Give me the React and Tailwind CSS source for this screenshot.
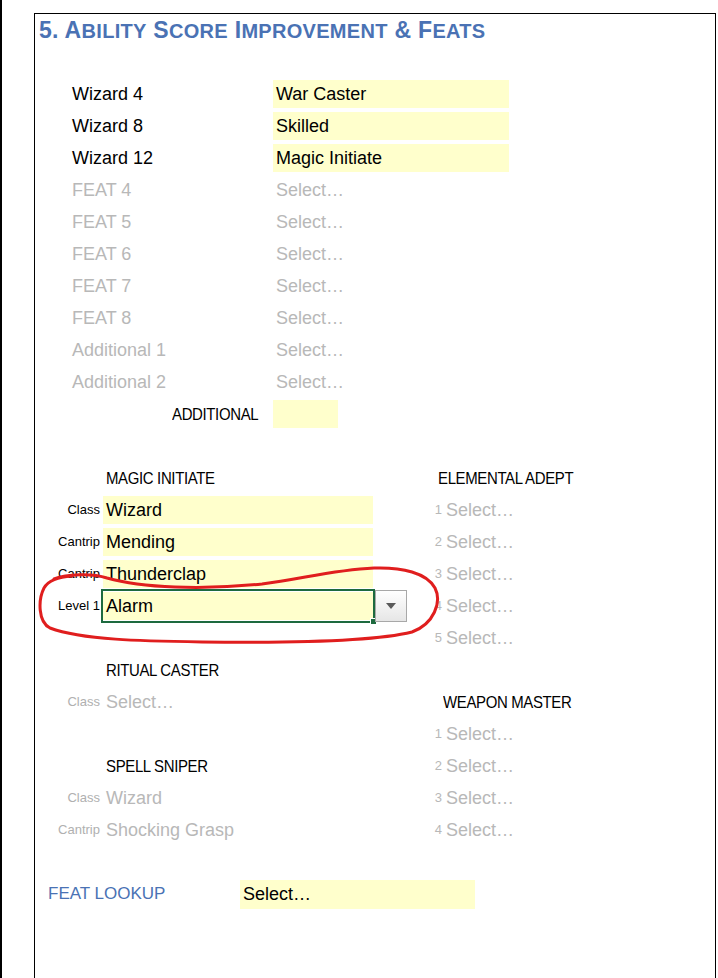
import React from 'react';

const featRows = [
  { label: 'Wizard 4', value: 'War Caster', set: true },
  { label: 'Wizard 8', value: 'Skilled', set: true },
  { label: 'Wizard 12', value: 'Magic Initiate', set: true },
  { label: 'FEAT 4' },
  { label: 'FEAT 5' },
  { label: 'FEAT 6' },
  { label: 'FEAT 7' },
  { label: 'FEAT 8' },
  { label: 'Additional 1' },
  { label: 'Additional 2' },
];

// narrow caps heading, like the sheet's condensed labels
function Caps({ children }) {
  return (
    <span className="inline-block origin-left scale-x-[0.88] text-[17px] tracking-[-0.4px] whitespace-nowrap">
      {children}
    </span>
  );
}

function Header({ children, className = '' }) {
  return (
    <div className={`h-[32px] flex items-center pt-[2px] text-black ${className}`}>
      <Caps>{children}</Caps>
    </div>
  );
}

// small label + yellow cell (left block)
function SubRow({ label, value, filled, selected }) {
  return (
    <div className="h-[32px] flex items-center">
      <div className={`w-[65px] text-right text-[13px] ${filled ? 'text-black' : 'text-[#b0b0b0]'}`}>{label}</div>
      <div className="relative ml-[3px]">
        <div
          className={`w-[270px] h-[28px] flex items-center pl-[3px] text-[18px] ${
            filled ? 'bg-[#ffffcc] text-black' : 'text-[#b8b8b8]'
          }`}
        >
          {value}
        </div>
        {selected && (
          <>
            <div className="absolute -left-[2px] -top-[3px] w-[274px] h-[34px] border-[2.5px] border-[#1d6a3f]" />
            <div className="absolute left-[267px] top-[26px] w-[7px] h-[7px] bg-[#1d6a3f] border border-white" />
            <div className="absolute left-[272px] -top-[2px] w-[32px] h-[32px] border border-[#a8a8a8] bg-gradient-to-b from-white to-[#e6e6e6] flex items-center justify-center">
              <svg width="10" height="6" viewBox="0 0 10 6">
                <path d="M0 0 H10 L5 6 Z" fill="#5a5a5a" />
              </svg>
            </div>
          </>
        )}
      </div>
    </div>
  );
}

function NumRow({ n }) {
  return (
    <div className="h-[32px] flex items-center">
      <div className="w-[22px] text-right text-[13px] text-[#b8b8b8]">{n}</div>
      <div className="pl-[4px] text-[18px] text-[#b8b8b8]">Select…</div>
    </div>
  );
}

const Blank = () => <div className="h-[32px]" />;

export default function App() {
  return (
    <div className="relative w-[718px] h-[978px] bg-white border-l-2 border-black overflow-hidden font-['Liberation_Sans',Arial,sans-serif]">
      <div className="ml-[32px] mt-[13px] w-[682px] h-[965px] border-t border-l border-r border-black">
        {/* title */}
        <div className="h-[32px] flex items-center pl-[4px] pt-[1px] font-bold text-[#4a72b4] tracking-[0.3px] whitespace-nowrap">
          <span className="text-[23px]">5. A</span>
          <span className="text-[20px]">BILITY</span>
          <span className="text-[23px]">&nbsp;S</span>
          <span className="text-[20px]">CORE</span>
          <span className="text-[23px]">&nbsp;I</span>
          <span className="text-[20px]">MPROVEMENT</span>
          <span className="text-[23px]">&nbsp;&amp; F</span>
          <span className="text-[20px]">EATS</span>
        </div>
        <Blank />

        {/* feats per level */}
        {featRows.map((r) => (
          <div key={r.label} className="h-[32px] flex items-center pl-[37px]">
            <div className={`w-[201px] text-[18px] ${r.set ? 'text-black' : 'text-[#b8b8b8]'}`}>{r.label}</div>
            <div
              className={`w-[236px] h-[28px] flex items-center pl-[3px] text-[18px] ${
                r.set ? 'bg-[#ffffcc] text-black' : 'text-[#b8b8b8]'
              }`}
            >
              {r.value || 'Select…'}
            </div>
          </div>
        ))}
        <div className="h-[32px] flex items-center pl-[37px]">
          <div className="w-[201px] pl-[100px] pt-[2px]">
            <Caps>ADDITIONAL</Caps>
          </div>
          <div className="w-[65px] h-[28px] bg-[#ffffcc]" />
        </div>
        <Blank />

        {/* feat details */}
        <div className="flex">
          <div className="w-[385px]">
            <Header className="pl-[71px]">MAGIC INITIATE</Header>
            <SubRow label="Class" value="Wizard" filled />
            <SubRow label="Cantrip" value="Mending" filled />
            <SubRow label="Cantrip" value="Thunderclap" filled />
            <SubRow label="Level 1" value="Alarm" filled selected />
            <Blank />
            <Header className="pl-[71px]">RITUAL CASTER</Header>
            <SubRow label="Class" value="Select…" />
            <Blank />
            <Header className="pl-[71px]">SPELL SNIPER</Header>
            <SubRow label="Class" value="Wizard" />
            <SubRow label="Cantrip" value="Shocking Grasp" />
          </div>
          <div className="flex-1">
            <Header className="pl-[18px]">ELEMENTAL ADEPT</Header>
            {[1, 2, 3, 4, 5].map((n) => (
              <NumRow key={n} n={n} />
            ))}
            <Blank />
            <Header className="pl-[23px]">WEAPON MASTER</Header>
            {[1, 2, 3, 4].map((n) => (
              <NumRow key={n} n={n} />
            ))}
          </div>
        </div>
        <Blank />

        {/* lookup */}
        <div className="h-[32px] flex items-center">
          <div className="w-[205px] pl-[13px] text-[17px] text-[#4a72b4]">FEAT LOOKUP</div>
          <div className="w-[235px] h-[29px] bg-[#ffffcc] flex items-center pl-[3px] text-[18px] text-black">Select…</div>
        </div>
      </div>

      {/* red marker annotation */}
      <svg className="absolute left-0 top-0 pointer-events-none" width="718" height="978">
        <path
          d="M52 579 C 65 574, 90 573, 105 578 C 140 588, 200 590, 260 584 C 300 579, 330 570, 372 568 C 400 567, 425 573, 433 588 C 440 602, 432 624, 410 632 C 370 642, 280 643, 200 642 C 140 641, 80 640, 48 628 C 36 622, 36 600, 42 588 C 46 581, 55 577, 70 576"
          fill="none"
          stroke="#e01e1e"
          strokeWidth="3"
          strokeLinecap="round"
        />
      </svg>
    </div>
  );
}
